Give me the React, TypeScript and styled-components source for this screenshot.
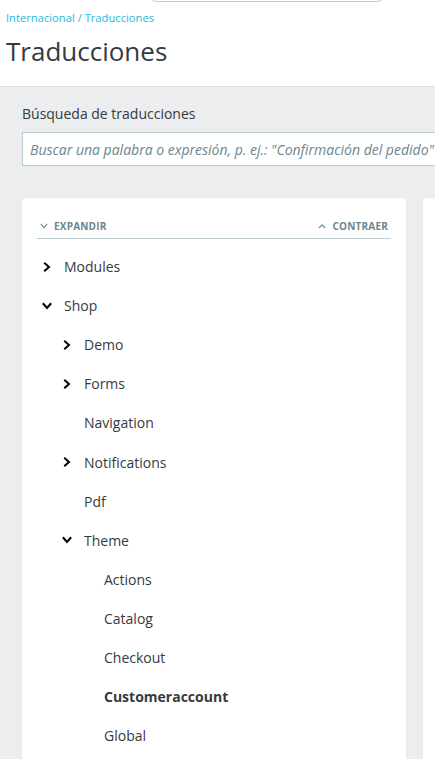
import React, { FC } from 'react';
import styled, { createGlobalStyle } from 'styled-components';

const GlobalStyle = createGlobalStyle`
    html, body {
        margin: 0;
        padding: 0;
        overflow: hidden;
        background: #ebedef;
        font-family: "Open Sans", "Noto Sans", sans-serif;
        color: #363a41;
    }
`;

const Page = styled.div`
    width: 900px;
    height: 759px;
    overflow: hidden;
    background: #ebedef;
`;

const Header = styled.header`
    background: #fff;
    border-bottom: 1px solid #dfe2e5;
    height: 87px;
    padding: 0 6px;
    box-sizing: border-box;
`;

const TopStrip = styled.div`
    height: 2px;
    overflow: hidden;
    display: flex;
    align-items: flex-end;
    padding-left: 143px;
`;

const TopSearch = styled.div`
    width: 236px;
    height: 30px;
    flex-shrink: 0;
    border: 1px solid #bbcdd2;
    border-radius: 8px;
    box-sizing: border-box;
`;

const Breadcrumb = styled.div`
    margin-top: 8px;
    font-size: 11.2px;
    line-height: 15px;
    color: #25b9d7;
`;

const Title = styled.h1`
    margin: 10px 0 0;
    font-size: 26px;
    font-weight: 400;
    line-height: 32px;
    color: #363a41;
`;

const Content = styled.main`
    padding: 17px 22px 0;
`;

const SearchLabel = styled.label`
    display: block;
    font-size: 14px;
    line-height: 20px;
    margin-bottom: 8px;
`;

const SearchInput = styled.input`
    display: block;
    width: 860px;
    height: 34px;
    box-sizing: border-box;
    padding: 0 7px;
    border: 1px solid #bbcdd2;
    background: #fff;
    font-family: inherit;
    font-size: 14px;
    outline: none;

    &::placeholder {
        font-style: italic;
        color: #6c868e;
    }
`;

const Columns = styled.div`
    display: flex;
    gap: 17px;
    margin-top: 32px;
    align-items: flex-start;
`;

const Card = styled.section<{ $width: number }>`
    width: ${p => p.$width}px;
    flex-shrink: 0;
    min-height: 620px;
    background: #fff;
    border-radius: 4px;
    box-shadow: 0 0 1px #dfe2e5;
    padding: 16px 15px 0;
    box-sizing: border-box;
`;

const Toolbar = styled.div`
    display: flex;
    justify-content: space-between;
    align-items: center;
    height: 24px;
    padding: 0 3px;
    border-bottom: 1px solid #bbcdd2;
`;

const ToolButton = styled.button`
    display: flex;
    align-items: center;
    gap: 6px;
    border: 0;
    background: none;
    padding: 0;
    font-family: inherit;
    font-size: 10px;
    font-weight: 700;
    letter-spacing: 0.2px;
    text-transform: uppercase;
    color: #6c868e;
    cursor: pointer;
`;

const Tree = styled.ul`
    list-style: none;
    margin: 8px 0 0;
    padding: 0;
`;

const Node = styled.li<{ $level: number }>`
    display: flex;
    align-items: center;
    height: 39.1px;
    padding-left: ${p => 3 + p.$level * 20}px;
    font-size: 14px;
`;

const Toggle = styled.span`
    width: 24px;
    display: flex;
    align-items: center;
    justify-content: flex-start;
    padding-left: 2px;
    box-sizing: border-box;
`;

const Label = styled.span<{ $active?: boolean }>`
    font-weight: ${p => (p.$active ? 700 : 400)};
    color: #363a41;
`;

const Chevron: FC<{ open?: boolean; size?: number; stroke?: string; width?: number; up?: boolean }> = ({
    open,
    up,
    size = 10,
    stroke = '#000',
    width = 2,
}) => {
    let d = 'M3 1.5 L7 5 L3 8.5';
    if (open) d = 'M1.5 3 L5 7 L8.5 3';
    if (up) d = 'M1.5 7 L5 3.5 L8.5 7';
    return (
        <svg width={size} height={size} viewBox="0 0 10 10" fill="none">
            <path d={d} stroke={stroke} strokeWidth={width} strokeLinecap="square" strokeLinejoin="miter" />
        </svg>
    );
};

interface INode {
    label: string;
    level: number;
    toggle?: 'open' | 'closed';
    active?: boolean;
}

const nodes: INode[] = [
    { label: 'Modules', level: 0, toggle: 'closed' },
    { label: 'Shop', level: 0, toggle: 'open' },
    { label: 'Demo', level: 1, toggle: 'closed' },
    { label: 'Forms', level: 1, toggle: 'closed' },
    { label: 'Navigation', level: 1 },
    { label: 'Notifications', level: 1, toggle: 'closed' },
    { label: 'Pdf', level: 1 },
    { label: 'Theme', level: 1, toggle: 'open' },
    { label: 'Actions', level: 2 },
    { label: 'Catalog', level: 2 },
    { label: 'Checkout', level: 2 },
    { label: 'Customeraccount', level: 2, active: true },
    { label: 'Global', level: 2 },
];

const App: FC = () => (
    <>
        <GlobalStyle />
        <Page>
            <Header>
                <TopStrip>
                    <TopSearch />
                </TopStrip>
                <Breadcrumb>Internacional / Traducciones</Breadcrumb>
                <Title>Traducciones</Title>
            </Header>
            <Content>
                <SearchLabel>Búsqueda de traducciones</SearchLabel>
                <SearchInput placeholder='Buscar una palabra o expresión, p. ej.: "Confirmación del pedido"' />
                <Columns>
                    <Card $width={384}>
                        <Toolbar>
                            <ToolButton>
                                <Chevron open size={8} stroke="#6c868e" width={1.4} />
                                Expandir
                            </ToolButton>
                            <ToolButton>
                                <Chevron up size={8} stroke="#6c868e" width={1.4} />
                                Contraer
                            </ToolButton>
                        </Toolbar>
                        <Tree>
                            {nodes.map(n => (
                                <Node key={n.label} $level={n.level}>
                                    <Toggle>
                                        {n.toggle && <Chevron open={n.toggle === 'open'} />}
                                    </Toggle>
                                    <Label $active={n.active}>{n.label}</Label>
                                </Node>
                            ))}
                        </Tree>
                    </Card>
                    <Card $width={440} />
                </Columns>
            </Content>
        </Page>
    </>
);

export default App;
